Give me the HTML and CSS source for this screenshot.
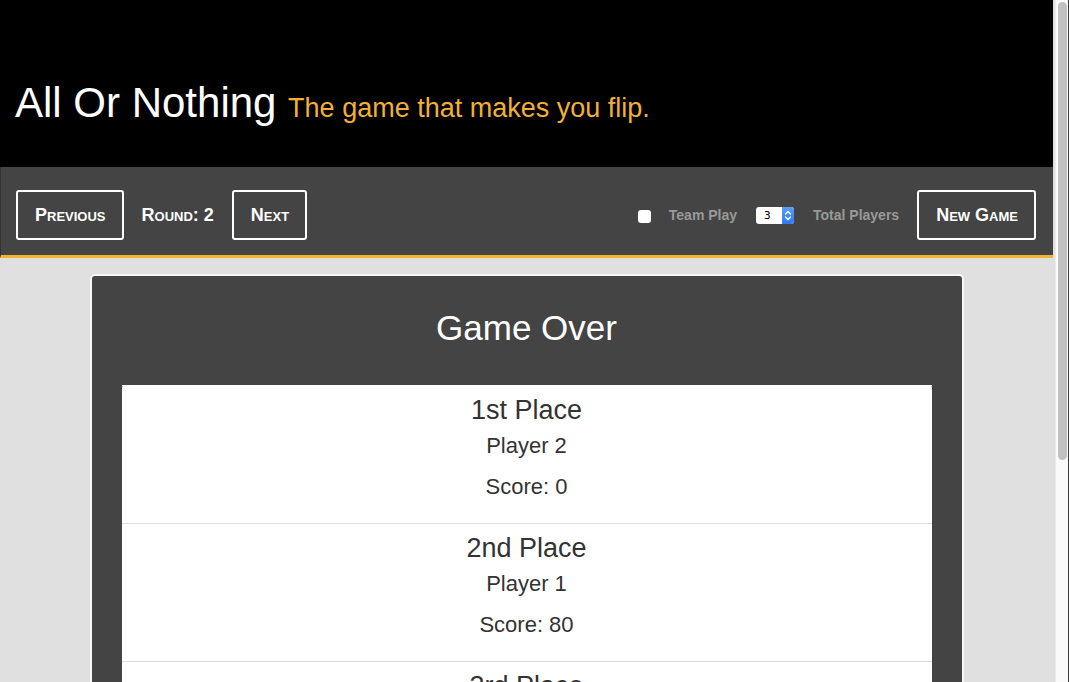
FILE: index.html
```html
<!DOCTYPE html>
<html lang="en">
<head>
<meta charset="utf-8">
<title>All Or Nothing</title>
<link rel="stylesheet" href="styles.css">
</head>
<body>
<div class="page">
<header class="masthead">
  <h1 class="title">All Or Nothing <small class="tagline">The game that makes you flip.</small></h1>
</header>
<nav class="toolbar">
  <div class="toolbar-group">
    <button class="btn">Previous</button>
    <span class="round">Round: 2</span>
    <button class="btn">Next</button>
  </div>
  <div class="toolbar-group">
    <span class="checkbox"></span>
    <span class="field-label">Team Play</span>
    <span class="stepper">
      <span class="stepper-value">3</span>
      <span class="stepper-arrows">
        <svg width="12" height="17" viewBox="0 0 12 17"><path d="M3.5 7 L6 4.5 L8.5 7 M3.5 10 L6 12.5 L8.5 10" fill="none" stroke="#fff" stroke-width="1.3" stroke-linecap="round" stroke-linejoin="round"/></svg>
      </span>
    </span>
    <span class="field-label">Total Players</span>
    <button class="btn">New Game</button>
  </div>
</nav>
<main class="main">
  <section class="card">
    <h2 class="card-title">Game Over</h2>
    <ul class="standings">
      <li class="standing">
        <h3 class="place">1st Place</h3>
        <p class="player">Player 2</p>
        <p class="score">Score: 0</p>
      </li>
      <li class="standing">
        <h3 class="place">2nd Place</h3>
        <p class="player">Player 1</p>
        <p class="score">Score: 80</p>
      </li>
      <li class="standing">
        <h3 class="place">3rd Place</h3>
        <p class="player">Player 3</p>
        <p class="score">Score: 120</p>
      </li>
    </ul>
  </section>
</main>
</div>
<div class="scrollbar"><div class="scrollbar-thumb"></div></div>
</body>
</html>
```
FILE: styles.css
```css
html {
  background: #e0e0e0;
}
body {
  margin: 0;
  background: #e0e0e0;
  font-family: "Liberation Sans", Arial, Helvetica, sans-serif;
  color: #333;
}
.page {
  margin-right: 16px;
}

.scrollbar {
  position: fixed;
  top: 0;
  right: 0;
  bottom: 0;
  width: 14px;
  background: #fafafa;
  border-left: 1px solid #ececec;
  border-right: 1px solid #3a3a3a;
  padding: 2px 0 0 2px;
  box-sizing: border-box;
}
.scrollbar-thumb {
  width: 9px;
  height: 458px;
  border-radius: 5px;
  background: #c1c1c1;
}

.masthead {
  background: #000;
  padding: 80px 15px 41px;
}
.title {
  margin: 0;
  font-size: 42px;
  line-height: 46px;
  font-weight: normal;
  color: #fff;
}
.tagline {
  font-size: 27px;
  line-height: 1;
  color: #f2b134;
}

.toolbar {
  background: #444;
  border-bottom: 3px solid #f0b42f;
  border-left: 1px solid #333;
  padding: 23px 17px 15px 15px;
  display: flex;
  justify-content: space-between;
  align-items: center;
}
.toolbar-group {
  display: flex;
  align-items: center;
  gap: 18px;
}
.btn {
  font-family: "Liberation Sans", Arial, Helvetica, sans-serif;
  font-size: 18px;
  font-weight: bold;
  font-variant: small-caps;
  color: #fff;
  background: transparent;
  border: 2px solid #fff;
  border-radius: 3px;
  height: 50px;
  line-height: 46px;
  padding: 0 16px 0 17px;
  margin: 0;
}
.round {
  font-size: 18px;
  font-weight: bold;
  font-variant: small-caps;
  color: #fff;
}
.checkbox {
  width: 13px;
  height: 13px;
  background: #fff;
  border-radius: 3px;
  margin-top: 3px;
}
.field-label {
  font-size: 14px;
  font-weight: bold;
  color: #999;
}
.stepper {
  display: flex;
  width: 38px;
  height: 17px;
  border-radius: 3px;
  overflow: hidden;
  background: #fff;
  margin: 0 1px;
}
.stepper-value {
  flex: 1;
  font-family: "DejaVu Sans Mono", "Liberation Mono", monospace;
  font-size: 11px;
  line-height: 17px;
  color: #000;
  padding-left: 8px;
}
.stepper-arrows {
  width: 12px;
  height: 17px;
  background: linear-gradient(#5d9cf8, #2f7cf3);
  display: flex;
}

.main {
  padding: 16px 0 30px;
}
.card {
  margin: 0 auto;
  background: #444;
  border: 2px solid #f6f6f6;
  border-radius: 5px;
  padding: 32px 30px 60px;
  box-sizing: content-box;
  width: 810px;
}
.card-title {
  margin: 0 0 37px;
  font-size: 35px;
  line-height: 40px;
  font-weight: normal;
  color: #fff;
  text-align: center;
}
.standings {
  list-style: none;
  margin: 0;
  padding: 0;
  background: #fff;
  border-radius: 3px;
}
.standing {
  border-top: 1px solid #ddd;
  padding: 9px 15px 23px;
  text-align: center;
}
.standing:first-child {
  border-top-color: #fff;
}
.place {
  margin: 0 0 8px;
  font-size: 27px;
  line-height: 30px;
  font-weight: normal;
  color: #333;
}
.player {
  margin: 0 0 15px;
  font-size: 22px;
  line-height: 26px;
}
.score {
  margin: 0;
  font-size: 22px;
  line-height: 26px;
}
```
